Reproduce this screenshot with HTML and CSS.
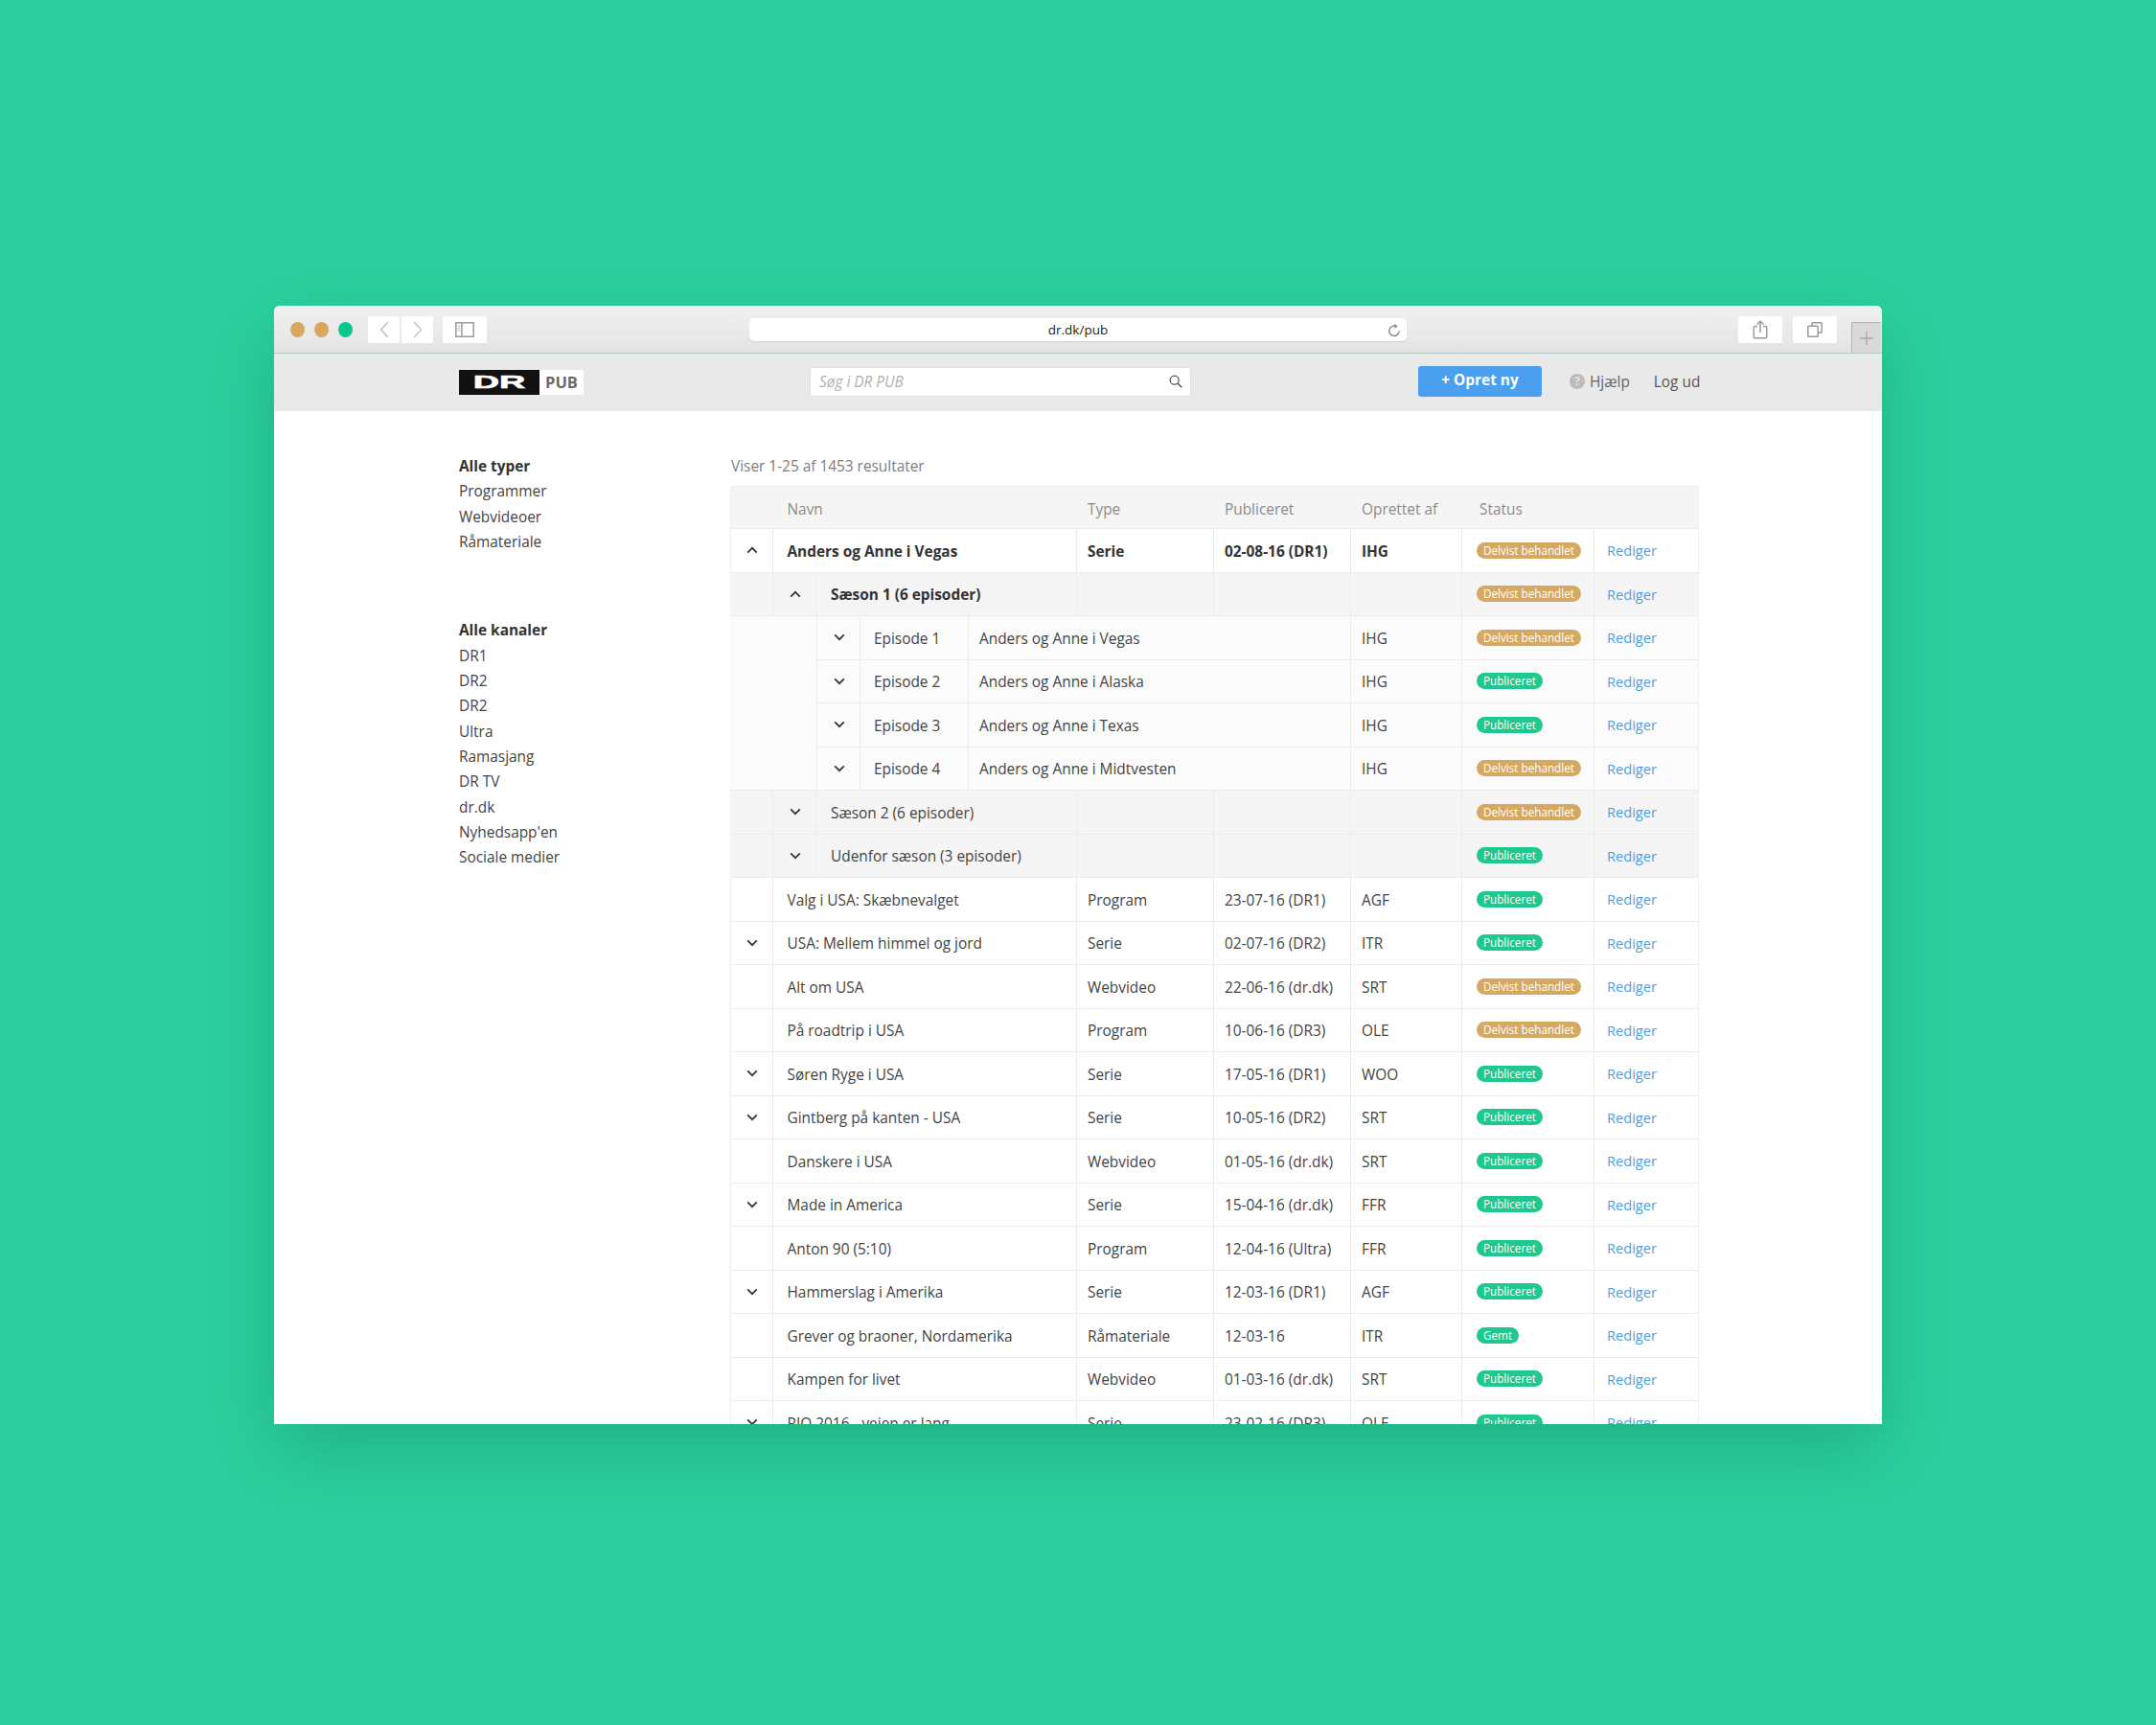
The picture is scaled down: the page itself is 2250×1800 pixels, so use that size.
FILE: index.html
```html
<!DOCTYPE html>
<html lang="da">
<head>
<meta charset="utf-8">
<title>DR PUB</title>
<link rel="stylesheet" href="styles.css">
</head>
<body>
<svg class="defs" width="0" height="0" aria-hidden="true">
  <symbol id="down" viewBox="0 0 12 8"><path d="M1.2 1.4 6 6.2l4.8-4.8" fill="none" stroke="#333" stroke-width="1.7"/></symbol>
  <symbol id="up" viewBox="0 0 12 8"><path d="M1.2 6.6 6 1.8l4.8 4.8" fill="none" stroke="#333" stroke-width="1.7"/></symbol>
</svg>
<div class="window">
  <header class="chrome">
    <div class="lights"><i class="dot gold"></i><i class="dot gold"></i><i class="dot green"></i></div>
    <div class="navbtns">
      <span class="btn b-nav"><svg width="12" height="20" viewBox="0 0 12 20"><path d="M10 2 2.5 10l7.5 8" fill="none" stroke="#c4c4c4" stroke-width="1.6"/></svg></span>
      <span class="btn b-nav"><svg width="12" height="20" viewBox="0 0 12 20"><path d="M2 2l7.5 8L2 18" fill="none" stroke="#c4c4c4" stroke-width="1.6"/></svg></span>
    </div>
    <span class="btn b-side"><svg width="20" height="16" viewBox="0 0 20 16"><rect x=".8" y=".8" width="18.4" height="14.4" fill="none" stroke="#9a9a9a" stroke-width="1.5"/><path d="M7 1v14" stroke="#9a9a9a" stroke-width="1.5"/><path d="M2.5 4h3M2.5 6.500h3M2.500 9h3" stroke="#bbb"/></svg></span>
    <div class="url"><span class="url-text">dr.dk/pub</span>
      <svg class="reload" width="14" height="16" viewBox="0 0 14 16"><path d="M9.500 3.700A5.200 5.200 0 1 0 12.200 8.500" fill="none" stroke="#8a8a8a" stroke-width="1.400"/><path d="M7.500 .8l3.200 2.800-3.200 2.200z" fill="#8a8a8a"/></svg>
    </div>
    <span class="btn b-tool b-share"><svg width="16" height="20" viewBox="0 0 16 20"><path d="M5 6.500H2.300a1 1 0 0 0-1 1v10.200a1 1 0 0 0 1 1h11.400a1 1 0 0 0 1-1V7.500a1 1 0 0 0-1-1H11M8 13V1.200M4.500 4.500 8 1.200l3.500 3.300" fill="none" stroke="#999" stroke-width="1.500"/></svg></span>
    <span class="btn b-tool"><svg width="16" height="16" viewBox="0 0 16 16"><path d="M5 4V1.800a1 1 0 0 1 1-1h8.200a1 1 0 0 1 1 1v8.400a1 1 0 0 1-1 1H11" fill="none" stroke="#999" stroke-width="1.500"/><rect x=".8" y="4.300" width="10.400" height="11" rx="1" fill="none" stroke="#999" stroke-width="1.500"/></svg></span>
    <span class="newtab"><svg width="14" height="14" viewBox="0 0 14 14"><path d="M7 0v14M0 7h14" stroke="#a8a8a8" stroke-width="1.400"/></svg></span>
  </header>
  <nav class="topnav">
    <div class="logo"><span class="logo-dr"><span class="logo-dr-text">DR</span></span><span class="logo-pub">PUB</span></div>
    <div class="search"><span class="placeholder">Søg i DR PUB</span>
      <svg width="14" height="14" viewBox="0 0 14 14"><circle cx="5.700" cy="5.700" r="4.500" fill="none" stroke="#555" stroke-width="1.300"/><path d="M9 9l4.300 4.300" stroke="#555" stroke-width="1.500"/></svg>
    </div>
    <a class="create">+ Opret ny</a>
    <span class="help"><i class="qmark">?</i>Hjælp</span>
    <span class="logout">Log ud</span>
  </nav>
  <main class="content">
    <aside class="side">
      <ul class="side-list">
        <li class="strong">Alle typer</li><li>Programmer</li><li>Webvideoer</li><li>Råmateriale</li>
      </ul>
      <ul class="side-list second">
        <li class="strong">Alle kanaler</li><li>DR1</li><li>DR2</li><li>DR2</li><li>Ultra</li><li>Ramasjang</li><li>DR TV</li><li>dr.dk</li><li>Nyhedsapp'en</li><li>Sociale medier</li>
      </ul>
    </aside>
    <section class="results">
      <p class="count">Viser 1-25 af 1453 resultater</p>
      <div class="grid">
        <div class="c h"></div><div class="c h s4 nm">Navn</div><div class="c h">Type</div><div class="c h">Publiceret</div><div class="c h">Oprettet af</div><div class="c h st-h">Status</div><div class="c h"></div>

        <div class="c tg b"><svg class="chev"><use href="#up"/></svg></div><div class="c s4 nm b">Anders og Anne i Vegas</div><div class="c b">Serie</div><div class="c b">02-08-16 (DR1)</div><div class="c b">IHG</div><div class="c st"><span class="badge gold">Delvist behandlet</span></div><div class="c ed"><a>Rediger</a></div>

        <div class="c se"></div><div class="c se tg"><svg class="chev"><use href="#up"/></svg></div><div class="c se s3 sn b">Sæson 1 (6 episoder)</div><div class="c se"></div><div class="c se"></div><div class="c se"></div><div class="c se st"><span class="badge gold">Delvist behandlet</span></div><div class="c se ed"><a>Rediger</a></div>

        <div class="c ep s2 gap"></div><div class="c ep tg"><svg class="chev"><use href="#down"/></svg></div><div class="c ep epn">Episode 1</div><div class="c ep s3">Anders og Anne i Vegas</div><div class="c ep">IHG</div><div class="c ep st"><span class="badge gold">Delvist behandlet</span></div><div class="c ep ed"><a>Rediger</a></div>
        <div class="c ep s2 gap"></div><div class="c ep tg"><svg class="chev"><use href="#down"/></svg></div><div class="c ep epn">Episode 2</div><div class="c ep s3">Anders og Anne i Alaska</div><div class="c ep">IHG</div><div class="c ep st"><span class="badge green">Publiceret</span></div><div class="c ep ed"><a>Rediger</a></div>
        <div class="c ep s2 gap"></div><div class="c ep tg"><svg class="chev"><use href="#down"/></svg></div><div class="c ep epn">Episode 3</div><div class="c ep s3">Anders og Anne i Texas</div><div class="c ep">IHG</div><div class="c ep st"><span class="badge green">Publiceret</span></div><div class="c ep ed"><a>Rediger</a></div>
        <div class="c ep s2 gap last"></div><div class="c ep tg"><svg class="chev"><use href="#down"/></svg></div><div class="c ep epn">Episode 4</div><div class="c ep s3">Anders og Anne i Midtvesten</div><div class="c ep">IHG</div><div class="c ep st"><span class="badge gold">Delvist behandlet</span></div><div class="c ep ed"><a>Rediger</a></div>

        <div class="c se"></div><div class="c se tg"><svg class="chev"><use href="#down"/></svg></div><div class="c se s3 sn">Sæson 2 (6 episoder)</div><div class="c se"></div><div class="c se"></div><div class="c se"></div><div class="c se st"><span class="badge gold">Delvist behandlet</span></div><div class="c se ed"><a>Rediger</a></div>
        <div class="c se"></div><div class="c se tg"><svg class="chev"><use href="#down"/></svg></div><div class="c se s3 sn">Udenfor sæson (3 episoder)</div><div class="c se"></div><div class="c se"></div><div class="c se"></div><div class="c se st"><span class="badge green">Publiceret</span></div><div class="c se ed"><a>Rediger</a></div>

        <div class="c tg"></div><div class="c s4 nm">Valg i USA: Skæbnevalget</div><div class="c">Program</div><div class="c">23-07-16 (DR1)</div><div class="c">AGF</div><div class="c st"><span class="badge green">Publiceret</span></div><div class="c ed"><a>Rediger</a></div>
        <div class="c tg"><svg class="chev"><use href="#down"/></svg></div><div class="c s4 nm">USA: Mellem himmel og jord</div><div class="c">Serie</div><div class="c">02-07-16 (DR2)</div><div class="c">ITR</div><div class="c st"><span class="badge green">Publiceret</span></div><div class="c ed"><a>Rediger</a></div>
        <div class="c tg"></div><div class="c s4 nm">Alt om USA</div><div class="c">Webvideo</div><div class="c">22-06-16 (dr.dk)</div><div class="c">SRT</div><div class="c st"><span class="badge gold">Delvist behandlet</span></div><div class="c ed"><a>Rediger</a></div>
        <div class="c tg"></div><div class="c s4 nm">På roadtrip i USA</div><div class="c">Program</div><div class="c">10-06-16 (DR3)</div><div class="c">OLE</div><div class="c st"><span class="badge gold">Delvist behandlet</span></div><div class="c ed"><a>Rediger</a></div>
        <div class="c tg"><svg class="chev"><use href="#down"/></svg></div><div class="c s4 nm">Søren Ryge i USA</div><div class="c">Serie</div><div class="c">17-05-16 (DR1)</div><div class="c">WOO</div><div class="c st"><span class="badge green">Publiceret</span></div><div class="c ed"><a>Rediger</a></div>
        <div class="c tg"><svg class="chev"><use href="#down"/></svg></div><div class="c s4 nm">Gintberg på kanten - USA</div><div class="c">Serie</div><div class="c">10-05-16 (DR2)</div><div class="c">SRT</div><div class="c st"><span class="badge green">Publiceret</span></div><div class="c ed"><a>Rediger</a></div>
        <div class="c tg"></div><div class="c s4 nm">Danskere i USA</div><div class="c">Webvideo</div><div class="c">01-05-16 (dr.dk)</div><div class="c">SRT</div><div class="c st"><span class="badge green">Publiceret</span></div><div class="c ed"><a>Rediger</a></div>
        <div class="c tg"><svg class="chev"><use href="#down"/></svg></div><div class="c s4 nm">Made in America</div><div class="c">Serie</div><div class="c">15-04-16 (dr.dk)</div><div class="c">FFR</div><div class="c st"><span class="badge green">Publiceret</span></div><div class="c ed"><a>Rediger</a></div>
        <div class="c tg"></div><div class="c s4 nm">Anton 90 (5:10)</div><div class="c">Program</div><div class="c">12-04-16 (Ultra)</div><div class="c">FFR</div><div class="c st"><span class="badge green">Publiceret</span></div><div class="c ed"><a>Rediger</a></div>
        <div class="c tg"><svg class="chev"><use href="#down"/></svg></div><div class="c s4 nm">Hammerslag i Amerika</div><div class="c">Serie</div><div class="c">12-03-16 (DR1)</div><div class="c">AGF</div><div class="c st"><span class="badge green">Publiceret</span></div><div class="c ed"><a>Rediger</a></div>
        <div class="c tg"></div><div class="c s4 nm">Grever og braoner, Nordamerika</div><div class="c">Råmateriale</div><div class="c">12-03-16</div><div class="c">ITR</div><div class="c st"><span class="badge green">Gemt</span></div><div class="c ed"><a>Rediger</a></div>
        <div class="c tg"></div><div class="c s4 nm">Kampen for livet</div><div class="c">Webvideo</div><div class="c">01-03-16 (dr.dk)</div><div class="c">SRT</div><div class="c st"><span class="badge green">Publiceret</span></div><div class="c ed"><a>Rediger</a></div>
        <div class="c tg"><svg class="chev"><use href="#down"/></svg></div><div class="c s4 nm">RIO 2016 - vejen er lang</div><div class="c">Serie</div><div class="c">23-02-16 (DR3)</div><div class="c">OLE</div><div class="c st"><span class="badge green">Publiceret</span></div><div class="c ed"><a>Rediger</a></div>
      </div>
    </section>
  </main>
</div>
</body>
</html>
```
FILE: styles.css
```css
* { box-sizing: border-box; }
html, body { margin: 0; }
body {
  height: 1800px;
  background: #2bd09e;
  padding: 319px 286px 0;
  font-family: "Open Sans", "Liberation Sans", sans-serif;
  font-size: 15.4px;
  color: #444;
  overflow: hidden;
}
.defs { position: absolute; }
.window {
  width: 1678px;
  height: 1167px;
  background: #fff;
  border-radius: 6px 6px 0 0;
  overflow: hidden;
  box-shadow: 0 28px 80px rgba(0, 70, 50, .22);
}
.chrome {
  height: 50px;
  display: flex;
  align-items: center;
  padding-left: 16.5px;
  background: linear-gradient(#f1f1f1, #e3e3e3);
  border-bottom: 1px solid #b9c9c6;
  position: relative;
}
.lights { display: flex; gap: 10px; width: 81.5px; }
.dot { width: 15px; height: 16px; border-radius: 50%; display: block; }
.dot.gold { background: #d8a85e; }
.dot.green { background: #0cc68f; }
.btn {
  height: 28px;
  background: #fff;
  border-radius: 2px;
  display: flex;
  align-items: center;
  justify-content: center;
}
.navbtns { display: flex; gap: 2px; }
.b-nav { width: 33px; }
.b-side { width: 46px; margin-left: 10px; }
.url {
  width: 686px;
  height: 24px;
  margin-left: 274px;
  background: #fff;
  border-radius: 5px;
  box-shadow: 0 1px 1px #d0d0d0;
  display: flex;
  align-items: center;
  justify-content: center;
  position: relative;
  font-size: 13.5px;
  color: #222;
}
.reload { position: absolute; right: 6px; top: 5px; }
.b-tool { width: 46px; margin-left: 11px; }
.b-share { margin-left: 346px; }
.newtab {
  width: 31px;
  height: 32px;
  margin-left: 15px;
  align-self: flex-end;
  border: 1px solid #b5b5b5;
  border-width: 1px 0 0 1px;
  background: #d9d9d9;
  display: flex;
  align-items: center;
  justify-content: center;
}
.topnav {
  height: 60px;
  background: #e9e9e9;
  display: flex;
  align-items: center;
  padding: 0 0 2px 193px;
}
.logo { display: flex; height: 26px; width: 130px; margin-top: 2px; }
.logo-dr {
  width: 84px;
  background: #111;
  display: flex;
  align-items: center;
  justify-content: center;
}
.logo-dr-text {
  display: block;
  color: #fff;
  font: 700 18px/1 "Liberation Sans", sans-serif;
  -webkit-text-stroke: .6px #fff;
  transform: scaleX(2.1);
}
.logo-pub {
  flex: 1;
  background: #fff;
  color: #6a6a6a;
  font-weight: 700;
  font-size: 16.5px;
  line-height: 26px;
  text-align: center;
}
.search {
  width: 398px;
  height: 31px;
  margin-left: 236px;
  background: #fff;
  border: 1px solid #e2e2e2;
  border-radius: 2px;
  display: flex;
  align-items: center;
  justify-content: space-between;
  padding: 0 8px 0 9px;
}
.placeholder { font-style: italic; color: #b0b0b0; }
.create {
  width: 129px;
  height: 32px;
  margin-left: 237px;
  background: #4a9fee;
  color: #fff;
  font-weight: 700;
  text-align: center;
  line-height: 30px;
  border-radius: 3px;
}
.help { display: flex; align-items: center; margin-left: 29px; gap: 5px; color: #666; }
.qmark {
  width: 16px;
  height: 16px;
  border-radius: 50%;
  background: #bcbcbc;
  color: #e4e4e4;
  font-size: 12px;
  font-style: normal;
  font-weight: 700;
  line-height: 16px;
  text-align: center;
}
.logout { margin-left: 25px; color: #555; }
.content { display: flex; padding: 45px 0 0 193px; }
.side { width: 283px; flex: none; }
.side-list { list-style: none; margin: 0; padding: 0; line-height: 26.35px; }
.side-list.second { margin-top: 66px; }
.strong { font-weight: 700; color: #333; }
.results { width: 1011px; flex: none; }
.count { margin: 0 0 7px; padding-left: 1px; line-height: 26px; color: #7d7d7d; }
.grid {
  display: grid;
  grid-template-columns: 45px 46px 45px 113px 113px 143px 143px 116px 138px 109px;
  grid-template-rows: 45px;
  grid-auto-rows: 45.5px;
  border-radius: 4px 4px 0 0;
  box-shadow: inset 1px 0 0 #eee, inset -1px 0 0 #eee;
  width: 1011px;
}
.c {
  display: flex;
  align-items: center;
  padding: 2px 0 0 11px;
  border-right: 1px solid #ececec;
  border-bottom: 1px solid #ececec;
  white-space: nowrap;
}
.h { background: #f5f5f5; color: #8b8b8b; border-right: 0; padding-top: 3px; }
.h:first-child { border-top-left-radius: 4px; border-left: 1px solid #eee; }
.h:nth-child(7) { border-top-right-radius: 4px; border-right: 1px solid #eee; }
.h:nth-child(-n+7) { border-top: 1px solid #eee; }
.s2 { grid-column: span 2; }
.s3 { grid-column: span 3; }
.s4 { grid-column: span 4; }
.nm { padding-left: 14.5px; }
.sn { padding-left: 14px; }
.epn { padding-left: 14px; }
.st { padding-left: 15px; padding-top: 0; }
.st-h { padding-left: 18px; }
.ed { padding-left: 13px; padding-top: 0; border-right: 1px solid #eee; }
.tg { padding: 0 0 0 1px; justify-content: center; }
.b { font-weight: 700; color: #333; }
.se { background: #f5f5f5; }
.ep { background: #fbfbfb; }
.gap { border-bottom: 0; }
.gap.last { border-bottom: 1px solid #ececec; }
.chev { width: 12px; height: 8px; }
.badge {
  height: 17px;
  line-height: 16px;
  padding: 0 7px;
  border-radius: 9px;
  color: #fff;
  font-size: 11.7px;
}
.badge.gold { background: #d6a962; }
.badge.green { background: #1fc88f; }
.ed a { color: #4a9fe6; font-size: 14.6px; }
```
